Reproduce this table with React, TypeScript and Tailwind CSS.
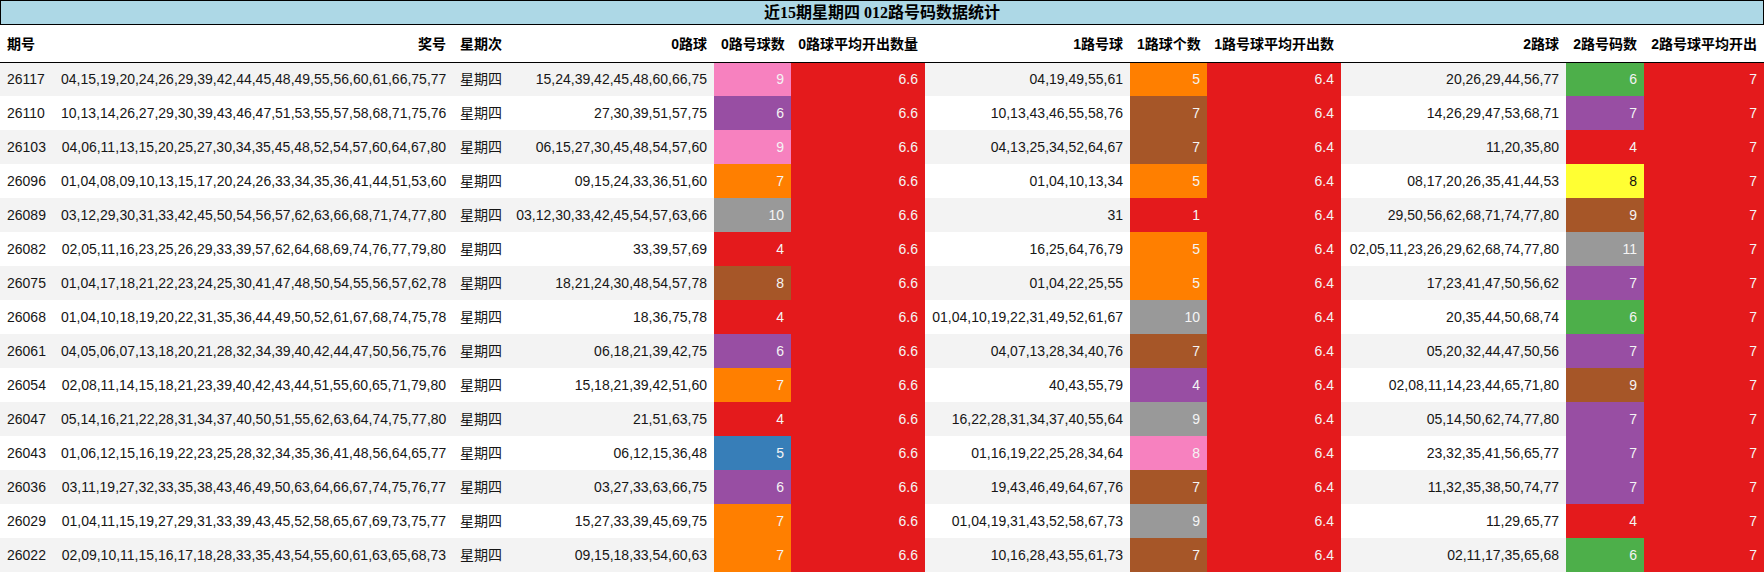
import React from 'react';

type Tone = 'pink' | 'purple' | 'orange' | 'grey' | 'red' | 'brown' | 'blue' | 'green' | 'yellow';

interface DrawRow {
  issue: string;
  balls: string;
  r0: string;
  c0: number;
  t0: Tone;
  r1: string;
  c1: number;
  t1: Tone;
  r2: string;
  c2: number;
  t2: Tone;
}

// Set1 palette, one class string per tone
const toneClass: Record<Tone, string> = {
  pink: 'bg-[#f781bf] text-[#f4f4f4]',
  purple: 'bg-[#984ea3] text-[#f4f4f4]',
  orange: 'bg-[#ff7f00] text-[#f4f4f4]',
  grey: 'bg-[#999999] text-[#f4f4f4]',
  red: 'bg-[#e41a1c] text-[#f4f4f4]',
  brown: 'bg-[#a65628] text-[#f4f4f4]',
  blue: 'bg-[#377eb8] text-[#f4f4f4]',
  green: 'bg-[#4daf4a] text-[#f4f4f4]',
  yellow: 'bg-[#ffff33] text-[#111111]',
};

const rows: DrawRow[] = [
  { issue: '26117', balls: '04,15,19,20,24,26,29,39,42,44,45,48,49,55,56,60,61,66,75,77', r0: '15,24,39,42,45,48,60,66,75', c0: 9, t0: 'pink', r1: '04,19,49,55,61', c1: 5, t1: 'orange', r2: '20,26,29,44,56,77', c2: 6, t2: 'green' },
  { issue: '26110', balls: '10,13,14,26,27,29,30,39,43,46,47,51,53,55,57,58,68,71,75,76', r0: '27,30,39,51,57,75', c0: 6, t0: 'purple', r1: '10,13,43,46,55,58,76', c1: 7, t1: 'brown', r2: '14,26,29,47,53,68,71', c2: 7, t2: 'purple' },
  { issue: '26103', balls: '04,06,11,13,15,20,25,27,30,34,35,45,48,52,54,57,60,64,67,80', r0: '06,15,27,30,45,48,54,57,60', c0: 9, t0: 'pink', r1: '04,13,25,34,52,64,67', c1: 7, t1: 'brown', r2: '11,20,35,80', c2: 4, t2: 'red' },
  { issue: '26096', balls: '01,04,08,09,10,13,15,17,20,24,26,33,34,35,36,41,44,51,53,60', r0: '09,15,24,33,36,51,60', c0: 7, t0: 'orange', r1: '01,04,10,13,34', c1: 5, t1: 'orange', r2: '08,17,20,26,35,41,44,53', c2: 8, t2: 'yellow' },
  { issue: '26089', balls: '03,12,29,30,31,33,42,45,50,54,56,57,62,63,66,68,71,74,77,80', r0: '03,12,30,33,42,45,54,57,63,66', c0: 10, t0: 'grey', r1: '31', c1: 1, t1: 'red', r2: '29,50,56,62,68,71,74,77,80', c2: 9, t2: 'brown' },
  { issue: '26082', balls: '02,05,11,16,23,25,26,29,33,39,57,62,64,68,69,74,76,77,79,80', r0: '33,39,57,69', c0: 4, t0: 'red', r1: '16,25,64,76,79', c1: 5, t1: 'orange', r2: '02,05,11,23,26,29,62,68,74,77,80', c2: 11, t2: 'grey' },
  { issue: '26075', balls: '01,04,17,18,21,22,23,24,25,30,41,47,48,50,54,55,56,57,62,78', r0: '18,21,24,30,48,54,57,78', c0: 8, t0: 'brown', r1: '01,04,22,25,55', c1: 5, t1: 'orange', r2: '17,23,41,47,50,56,62', c2: 7, t2: 'purple' },
  { issue: '26068', balls: '01,04,10,18,19,20,22,31,35,36,44,49,50,52,61,67,68,74,75,78', r0: '18,36,75,78', c0: 4, t0: 'red', r1: '01,04,10,19,22,31,49,52,61,67', c1: 10, t1: 'grey', r2: '20,35,44,50,68,74', c2: 6, t2: 'green' },
  { issue: '26061', balls: '04,05,06,07,13,18,20,21,28,32,34,39,40,42,44,47,50,56,75,76', r0: '06,18,21,39,42,75', c0: 6, t0: 'purple', r1: '04,07,13,28,34,40,76', c1: 7, t1: 'brown', r2: '05,20,32,44,47,50,56', c2: 7, t2: 'purple' },
  { issue: '26054', balls: '02,08,11,14,15,18,21,23,39,40,42,43,44,51,55,60,65,71,79,80', r0: '15,18,21,39,42,51,60', c0: 7, t0: 'orange', r1: '40,43,55,79', c1: 4, t1: 'purple', r2: '02,08,11,14,23,44,65,71,80', c2: 9, t2: 'brown' },
  { issue: '26047', balls: '05,14,16,21,22,28,31,34,37,40,50,51,55,62,63,64,74,75,77,80', r0: '21,51,63,75', c0: 4, t0: 'red', r1: '16,22,28,31,34,37,40,55,64', c1: 9, t1: 'grey', r2: '05,14,50,62,74,77,80', c2: 7, t2: 'purple' },
  { issue: '26043', balls: '01,06,12,15,16,19,22,23,25,28,32,34,35,36,41,48,56,64,65,77', r0: '06,12,15,36,48', c0: 5, t0: 'blue', r1: '01,16,19,22,25,28,34,64', c1: 8, t1: 'pink', r2: '23,32,35,41,56,65,77', c2: 7, t2: 'purple' },
  { issue: '26036', balls: '03,11,19,27,32,33,35,38,43,46,49,50,63,64,66,67,74,75,76,77', r0: '03,27,33,63,66,75', c0: 6, t0: 'purple', r1: '19,43,46,49,64,67,76', c1: 7, t1: 'brown', r2: '11,32,35,38,50,74,77', c2: 7, t2: 'purple' },
  { issue: '26029', balls: '01,04,11,15,19,27,29,31,33,39,43,45,52,58,65,67,69,73,75,77', r0: '15,27,33,39,45,69,75', c0: 7, t0: 'orange', r1: '01,04,19,31,43,52,58,67,73', c1: 9, t1: 'grey', r2: '11,29,65,77', c2: 4, t2: 'red' },
  { issue: '26022', balls: '02,09,10,11,15,16,17,18,28,33,35,43,54,55,60,61,63,65,68,73', r0: '09,15,18,33,54,60,63', c0: 7, t0: 'orange', r1: '10,16,28,43,55,61,73', c1: 7, t1: 'brown', r2: '02,11,17,35,65,68', c2: 6, t2: 'green' },
];

const widths = [54, 399, 56, 205, 77, 134, 205, 77, 134, 225, 78, 120];

const headers: { label: string; right: boolean }[] = [
  { label: '期号', right: false },
  { label: '奖号', right: true },
  { label: '星期次', right: false },
  { label: '0路球', right: true },
  { label: '0路号球数', right: true },
  { label: '0路球平均开出数量', right: true },
  { label: '1路号球', right: true },
  { label: '1路球个数', right: true },
  { label: '1路号球平均开出数', right: true },
  { label: '2路球', right: true },
  { label: '2路号码数', right: true },
  { label: '2路号球平均开出', right: true },
];

export default function App() {
  return (
    <div className="w-[1764px] bg-white font-['Liberation_Sans','Noto_Sans_CJK_SC',sans-serif] text-[14px] text-[#161616]">
      {/* Title bar */}
      <div className="flex h-[25px] items-center justify-center border border-black bg-[#add8e6]">
        <span className="font-['Liberation_Serif','Noto_Sans_CJK_SC',serif] text-[16px] font-bold leading-none text-black">
          近15期星期四 012路号码数据统计
        </span>
      </div>

      <table className="w-[1764px] table-fixed border-collapse">
        <colgroup>
          {widths.map((w, i) => (
            <col key={i} style={{ width: w }} />
          ))}
        </colgroup>
        <thead>
          <tr className="h-[37px] border-b border-black">
            {headers.map((h) => (
              <th
                key={h.label}
                className={`overflow-hidden whitespace-nowrap px-[7px] pt-[2px] font-bold text-black ${h.right ? 'text-right' : 'text-left'}`}
              >
                {h.label}
              </th>
            ))}
          </tr>
        </thead>
        <tbody>
          {rows.map((r, i) => (
            <tr key={r.issue} className={`h-[34px] ${i % 2 === 0 ? 'bg-[#f3f3f3]' : 'bg-white'}`}>
              <td className="whitespace-nowrap px-[7px] text-left">{r.issue}</td>
              <td className="whitespace-nowrap px-[7px] text-right">{r.balls}</td>
              <td className="whitespace-nowrap px-[7px] text-left">星期四</td>
              <td className="whitespace-nowrap px-[7px] text-right">{r.r0}</td>
              <td className={`px-[7px] text-right ${toneClass[r.t0]}`}>{r.c0}</td>
              <td className={`px-[7px] text-right ${toneClass.red}`}>6.6</td>
              <td className="whitespace-nowrap px-[7px] text-right">{r.r1}</td>
              <td className={`px-[7px] text-right ${toneClass[r.t1]}`}>{r.c1}</td>
              <td className={`px-[7px] text-right ${toneClass.red}`}>6.4</td>
              <td className="whitespace-nowrap px-[7px] text-right">{r.r2}</td>
              <td className={`px-[7px] text-right ${toneClass[r.t2]}`}>{r.c2}</td>
              <td className={`px-[7px] text-right ${toneClass.red}`}>7</td>
            </tr>
          ))}
        </tbody>
      </table>
    </div>
  );
}
